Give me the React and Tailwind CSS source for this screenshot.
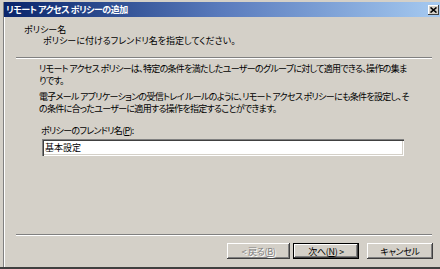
const FONT = "font-['Noto_Sans_CJK_JP','Noto_Sans',sans-serif] [font-feature-settings:'palt']"

function Btn({ children, disabled, primary, width }) {
  return (
    <div
      className={`h-[16px] ${width} flex items-center justify-center bg-[#d4d0c8] text-[9px] leading-none tracking-[-0.3px] ${
        primary
          ? 'border border-black shadow-[inset_-1px_-1px_#404040,inset_1px_1px_#fff,inset_-2px_-2px_#808080]'
          : 'shadow-[inset_-1px_-1px_#404040,inset_1px_1px_#fff,inset_-2px_-2px_#808080]'
      } ${disabled ? 'text-[#808080] [text-shadow:1px_1px_0_#fff]' : 'text-black'}`}
    >
      {children}
    </div>
  )
}

export default function App() {
  return (
    <div className={`w-[440px] h-[269px] bg-[#d4d0c8] pl-[3px] pt-[2px] border-b-2 border-b-[#404040] flex flex-col text-black ${FONT}`}>
      <div className="flex-1 flex flex-col border-l border-l-[#808080]">
        {/* Title bar */}
        <div className="h-[15px] flex items-center justify-between bg-linear-to-r from-[#0a246a] via-[#5a7bbd] to-[#a6caf0] pl-[2px] pr-[1px]">
          <span className="text-white text-[9px] font-bold leading-none tracking-[-0.5px] whitespace-nowrap">
            リモート アクセス ポリシーの追加
          </span>
          <div className="w-[11px] h-[10px] bg-[#d4d0c8] flex items-center justify-center shadow-[inset_-1px_-1px_#404040,inset_1px_1px_#fff]">
            <svg width="7" height="6" viewBox="0 0 7 6">
              <path d="M0.5 0.5 L6.5 5.5 M6.5 0.5 L0.5 5.5" stroke="#000" strokeWidth="1.6" />
            </svg>
          </div>
        </div>

        <div className="flex-1 flex flex-col border-l border-l-white">
          {/* Header */}
          <div className="pt-[7px] pl-[19px] text-[9px] leading-[11px] whitespace-nowrap">
            <div>ポリシー名</div>
            <div className="pl-[19px]">ポリシーに付けるフレンドリ名を指定してください。</div>
          </div>
          <div className="mt-[11px] ml-[11px] mr-[8px] border-t border-t-[#808080] border-b border-b-white" />

          {/* Body */}
          <div className="pl-[34px] pt-[4px] text-[9px] leading-[12px] tracking-[-0.7px] whitespace-nowrap">
            <p>
              リモート アクセス ポリシーは、特定の条件を満たしたユーザーのグループに対して適用できる、操作の集ま
              <br />
              りです。
            </p>
            <p className="mt-[4px]">
              電子メール アプリケーションの受信トレイ ルールのように、リモート アクセス ポリシーにも条件を設定し、そ
              <br />
              の条件に合ったユーザーに適用する操作を指定することができます。
            </p>
            <div className="mt-[10px] pl-[2px]">
              ポリシーのフレンドリ名(<span className="underline">P</span>):
            </div>
            <div className="mt-[2px] ml-[3px] w-[362px] h-[17px] bg-white flex items-center pl-[3px] tracking-normal shadow-[inset_1px_1px_#808080,inset_2px_2px_#404040,inset_-1px_-1px_#fff,inset_-2px_-2px_#d4d0c8]">
              基本設定
            </div>
          </div>

          <div className="flex-1" />

          {/* Footer */}
          <div className="ml-[11px] mr-[8px] border-t border-t-[#808080] border-b border-b-white" />
          <div className="mt-[7px] mb-[8px] flex justify-end items-center pr-[7px]">
            <Btn disabled width="w-[63px]">
              &lt; 戻る(<span className="underline">B</span>)
            </Btn>
            <div className="w-[3px]" />
            <Btn primary width="w-[66px]">
              次へ(<span className="underline">N</span>) &gt;
            </Btn>
            <div className="w-[8px]" />
            <Btn width="w-[66px]">キャンセル</Btn>
          </div>
        </div>
      </div>
    </div>
  )
}
